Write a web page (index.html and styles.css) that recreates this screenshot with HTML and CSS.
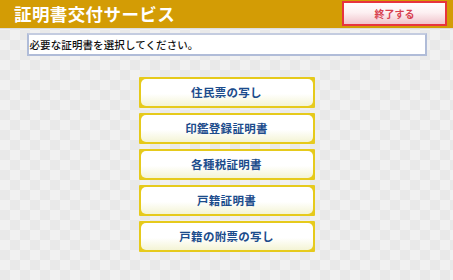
FILE: index.html
```html
<!DOCTYPE html>
<html lang="ja">
<head>
<meta charset="utf-8">
<title>証明書交付サービス</title>
<link rel="stylesheet" href="styles.css">
</head>
<body>
<div class="screen">
  <header class="header">
    <h1 class="title">証明書交付サービス</h1>
    <button class="exit">終了する</button>
  </header>
  <div class="main">
    <div class="prompt">必要な証明書を選択してください。</div>
    <div class="menu">
      <button class="item"><span class="item-face">住民票の写し</span></button>
      <button class="item"><span class="item-face">印鑑登録証明書</span></button>
      <button class="item"><span class="item-face">各種税証明書</span></button>
      <button class="item"><span class="item-face">戸籍証明書</span></button>
      <button class="item"><span class="item-face">戸籍の附票の写し</span></button>
    </div>
  </div>
</div>
</body>
</html>
```
FILE: styles.css
```css
html, body {
  margin: 0;
  padding: 0;
}
body {
  width: 453px;
  height: 280px;
  overflow: hidden;
  font-family: "Noto Sans CJK JP", "Noto Sans", sans-serif;
}
.screen {
  width: 453px;
  height: 280px;
  display: flex;
  flex-direction: column;
  background-color: #f1f1f1;
  background-image: conic-gradient(#e9e9e9 25%, transparent 0 50%, #e9e9e9 0 75%, transparent 0);
  background-size: 20px 20px;
}
.header {
  height: 29px;
  flex: none;
  background: #d39c05;
  border-bottom: 1px solid #dcdcdc;
  display: flex;
  align-items: flex-start;
  justify-content: space-between;
  box-sizing: border-box;
}
.title {
  margin: 0;
  padding-left: 14px;
  font-size: 17.5px;
  line-height: 27px;
  font-weight: 700;
  color: #ffffff;
  letter-spacing: 0.4px;
}
.exit {
  margin: 1px 6px 0 0;
  width: 105px;
  height: 25px;
  box-sizing: border-box;
  border: 2px solid #e8343e;
  background: linear-gradient(to bottom, #ffffff 0%, #fdf0f2 45%, #f0c4cc 100%);
  color: #d7404f;
  font-family: inherit;
  font-size: 10px;
  font-weight: 700;
  padding: 0;
  line-height: 21px;
}
.main {
  display: flex;
  flex-direction: column;
  align-items: center;
}
.prompt {
  margin-top: 4px;
  width: 400px;
  height: 23px;
  box-sizing: border-box;
  background: #ffffff;
  border: 2px solid #b0bcd8;
  border-top-color: #c4cce0;
  padding-left: 1px;
  font-size: 10.5px;
  line-height: 19px;
  color: #111111;
  font-weight: 500;
  letter-spacing: 0.1px;
}
.menu {
  margin-top: 21px;
  display: flex;
  flex-direction: column;
  gap: 5px;
}
.item {
  width: 176px;
  height: 31px;
  padding: 2px;
  border: 0;
  margin: 0;
  box-sizing: border-box;
  background: #e6ca1c;
  border-radius: 1px;
  display: flex;
  font-family: inherit;
}
.item-face {
  flex: 1;
  border-radius: 5px;
  background: linear-gradient(to bottom, #ffffff 0%, #ffffff 55%, #f4f4d4 100%);
  color: #1c4c8c;
  font-size: 11.5px;
  font-weight: 700;
  line-height: 27px;
  text-align: center;
  letter-spacing: 0.3px;
}
```
